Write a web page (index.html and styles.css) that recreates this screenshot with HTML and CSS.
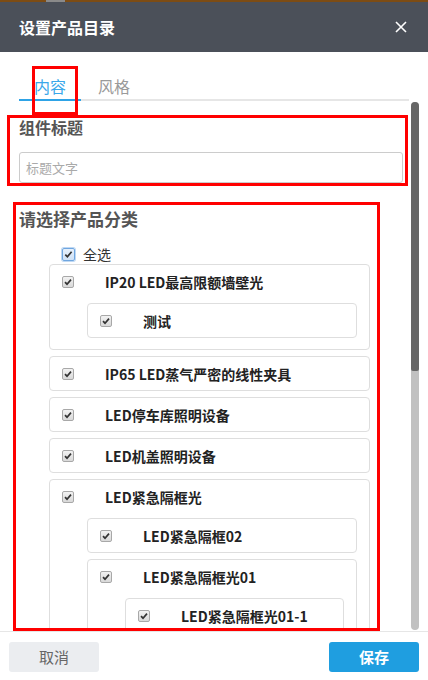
FILE: index.html
```html
<!DOCTYPE html>
<html lang="zh">
<head>
<meta charset="utf-8">
<title>设置产品目录</title>
<link rel="stylesheet" href="styles.css">
</head>
<body>
<div class="dialog">
  <div class="topstrip"></div>
  <header class="header">
    <h1 class="title">设置产品目录</h1>
    <svg class="close" width="12" height="12" viewBox="0 0 12 12"><path d="M1 1L11 11M11 1L1 11" stroke="#fff" stroke-width="1.6" fill="none"/></svg>
  </header>
  <nav class="tabs">
    <div class="tab active">内容</div>
    <div class="tab">风格</div>
  </nav>
  <div class="scroll">
    <div class="scroll-content">
      <section class="box box-title">
        <h2 class="label">组件标题</h2>
        <div class="input">标题文字</div>
      </section>
      <section class="box box-cats">
        <h2 class="label label-lg">请选择产品分类</h2>
        <div class="all-row"><span class="cb cb-focus"><svg width="11" height="11" viewBox="0 0 11 11"><path d="M2.3 5.6L4.4 7.7L8.6 2.8" stroke="#333" stroke-width="1.7" fill="none"/></svg></span><span class="all-text">全选</span></div>
        <div class="cards">
          <div class="card">
            <div class="row"><span class="cb"><svg width="10" height="10" viewBox="0 0 10 10"><path d="M2 5.2L4 7.2L8 2.6" stroke="#333" stroke-width="1.7" fill="none"/></svg></span><span class="name">IP20 LED最高限额墙壁光</span></div>
            <div class="children">
              <div class="card"><div class="row"><span class="cb"><svg width="10" height="10" viewBox="0 0 10 10"><path d="M2 5.2L4 7.2L8 2.6" stroke="#333" stroke-width="1.7" fill="none"/></svg></span><span class="name">测试</span></div></div>
            </div>
          </div>
          <div class="card"><div class="row"><span class="cb"><svg width="10" height="10" viewBox="0 0 10 10"><path d="M2 5.2L4 7.2L8 2.6" stroke="#333" stroke-width="1.7" fill="none"/></svg></span><span class="name">IP65 LED蒸气严密的线性夹具</span></div></div>
          <div class="card"><div class="row"><span class="cb"><svg width="10" height="10" viewBox="0 0 10 10"><path d="M2 5.2L4 7.2L8 2.6" stroke="#333" stroke-width="1.7" fill="none"/></svg></span><span class="name">LED停车库照明设备</span></div></div>
          <div class="card"><div class="row"><span class="cb"><svg width="10" height="10" viewBox="0 0 10 10"><path d="M2 5.2L4 7.2L8 2.6" stroke="#333" stroke-width="1.7" fill="none"/></svg></span><span class="name">LED机盖照明设备</span></div></div>
          <div class="card">
            <div class="row"><span class="cb"><svg width="10" height="10" viewBox="0 0 10 10"><path d="M2 5.2L4 7.2L8 2.6" stroke="#333" stroke-width="1.7" fill="none"/></svg></span><span class="name">LED紧急隔框光</span></div>
            <div class="children">
              <div class="card"><div class="row"><span class="cb"><svg width="10" height="10" viewBox="0 0 10 10"><path d="M2 5.2L4 7.2L8 2.6" stroke="#333" stroke-width="1.7" fill="none"/></svg></span><span class="name">LED紧急隔框02</span></div></div>
              <div class="card">
                <div class="row"><span class="cb"><svg width="10" height="10" viewBox="0 0 10 10"><path d="M2 5.2L4 7.2L8 2.6" stroke="#333" stroke-width="1.7" fill="none"/></svg></span><span class="name">LED紧急隔框光01</span></div>
                <div class="children">
                  <div class="card"><div class="row"><span class="cb"><svg width="10" height="10" viewBox="0 0 10 10"><path d="M2 5.2L4 7.2L8 2.6" stroke="#333" stroke-width="1.7" fill="none"/></svg></span><span class="name">LED紧急隔框光01-1</span></div></div>
                </div>
              </div>
            </div>
          </div>
        </div>
      </section>
    </div>
    <div class="scrollbar"><div class="thumb"></div></div>
  </div>
  <footer class="footer">
    <button class="btn btn-cancel">取消</button>
    <button class="btn btn-save">保存</button>
  </footer>
</div>
</body>
</html>
```
FILE: styles.css
```css
* { box-sizing: border-box; }
html, body { margin: 0; padding: 0; }
body {
  width: 428px;
  height: 680px;
  overflow: hidden;
  background: #fff;
  font-family: "Noto Sans CJK SC", "Noto Sans", sans-serif;
  color: #333;
}
.dialog { display: flex; flex-direction: column; height: 680px; }
.topstrip {
  height: 2px;
  background: linear-gradient(to right, #7d4c14 46px, #8a8a8a 46px, #8a8a8a 65px, #7d4c14 65px);
}
.header {
  height: 50px;
  background: #4b5059;
  display: flex;
  align-items: center;
  justify-content: space-between;
  padding: 0 21px 0 19px;
}
.title {
  margin: 0;
  font-size: 16px;
  line-height: 20px;
  font-weight: bold;
  color: #fff;
}
.close { display: block; }
.tabs {
  display: flex;
  margin-left: 19px;
  width: 390px;
  height: 49px;
  border-bottom: 2px solid #e6e6e6;
}
.tab {
  position: relative;
  width: 62px;
  text-align: center;
  font-size: 16px;
  line-height: 20px;
  padding-top: 24px;
  color: #9a9a9a;
}
.tab + .tab { margin-left: 2px; }
.tab.active {
  color: #3aa7ea;
  border-bottom: 2px solid #2ea3e6;
  margin-bottom: -2px;
}
.tab.active::after {
  content: "";
  position: absolute;
  left: 13px;
  top: 14px;
  width: 40px;
  height: 43px;
  border: 3px solid #ff0000;
}
.scroll {
  height: 530px;
  display: flex;
}
.scroll-content {
  flex: 1;
  display: flex;
  flex-direction: column;
  overflow: hidden;
}
.scrollbar {
  width: 8px;
  margin: 1px 9px 1px 0;
  background: #c1c1c1;
  border-radius: 4px;
}
.thumb {
  height: 269px;
  background: #666;
  border-radius: 4px 4px 2px 2px;
}
.box { border: 3px solid #ff0000; }
.box-title {
  margin: 14px 0 0 7px;
  width: 401px;
  padding: 0 2px 0 9px;
}
.label {
  margin: 0;
  font-size: 16px;
  line-height: 19px;
  font-weight: bold;
  color: #555;
}
.input {
  margin-top: 15px;
  height: 31px;
  border: 1px solid #ccc;
  border-radius: 3px;
  padding-left: 6px;
  font-size: 13px;
  line-height: 29px;
  color: #aaa;
}
.box-cats {
  margin: 16px 0 0 13px;
  width: 367px;
  flex: 1;
  min-height: 0;
  overflow: hidden;
  padding: 3px 0 0 3px;
}
.label-lg { font-size: 17px; line-height: 22px; }
.all-row {
  display: flex;
  align-items: center;
  height: 17px;
  margin: 16px 0 0 43px;
}
.cb {
  width: 12px;
  height: 12px;
  border: 1px solid #a8a8a8;
  border-radius: 2px;
  background: linear-gradient(#f2f2f2, #d9d9d9);
  display: flex;
  align-items: center;
  justify-content: center;
  flex: none;
}
.cb svg { display: block; }
.cb-focus {
  width: 13px;
  height: 13px;
  border-color: #6fa6e0;
  background: linear-gradient(#e6f0fb, #cfe1f6);
  box-shadow: 0 0 0 1px #bfd8f3;
}
.all-text {
  margin-left: 8px;
  font-size: 14px;
  line-height: 17px;
  color: #333;
}
.cards {
  display: flex;
  flex-direction: column;
  gap: 6px;
  margin: 1px 7px 0 30px;
}
.card {
  border: 1px solid #dedede;
  border-radius: 4px;
  background: #fff;
}
.row {
  height: 33px;
  display: flex;
  align-items: center;
  padding-left: 12px;
}
.name {
  margin-left: 31px;
  font-size: 14px;
  font-weight: bold;
  color: #222;
  line-height: 18px;
  white-space: nowrap;
}
.children {
  display: flex;
  flex-direction: column;
  gap: 6px;
  padding: 5px 12px 11px 37px;
}
.footer {
  flex: 1;
  border-top: 1px solid #e6e6e6;
  display: flex;
  justify-content: space-between;
  align-items: flex-start;
  padding: 10px 9px 0 9px;
}
.btn {
  width: 90px;
  height: 30px;
  border: none;
  border-radius: 3px;
  font-family: "Noto Sans CJK SC", "Noto Sans", sans-serif;
  font-size: 15px;
  line-height: 30px;
  padding: 0;
}
.btn-cancel { background: #ebedf0; color: #666; }
.btn-save { background: #1f9ee0; color: #fff; font-weight: bold; }
```
